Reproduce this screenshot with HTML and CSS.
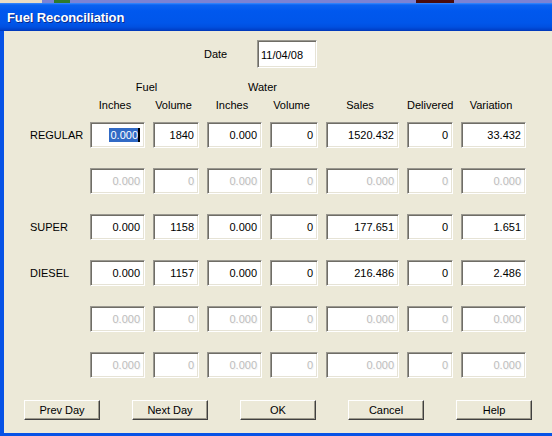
FILE: index.html
```html
<!DOCTYPE html>
<html>
<head>
<meta charset="utf-8">
<link rel="stylesheet" href="styles.css">
</head>
<body>
<div class="strip">
  <span class="strip-tan"></span>
  <span class="strip-gap1"></span>
  <span class="strip-green"></span>
  <span class="strip-gap2"></span>
  <span class="strip-red"></span>
</div>
<div class="window">
  <div class="titlebar"><span class="title">Fuel Reconciliation</span></div>
  <div class="client">
    <div class="date-row">
      <span class="lbl">Date</span>
      <div class="field date">11/04/08</div>
    </div>
    <div class="hdr">
      <div class="grp g1">Fuel</div>
      <div class="grp g2">Water</div>
      <div class="col c1">Inches</div>
      <div class="col c2">Volume</div>
      <div class="col c3">Inches</div>
      <div class="col c4">Volume</div>
      <div class="col c5">Sales</div>
      <div class="col c6">Delivered</div>
      <div class="col c7">Variation</div>
    </div>
    <div class="rows">
      <div class="rlbl">REGULAR</div>
      <div class="field"><span class="sel">0.000</span><span class="caret"></span></div>
      <div class="field">1840</div>
      <div class="field">0.000</div>
      <div class="field">0</div>
      <div class="field">1520.432</div>
      <div class="field">0</div>
      <div class="field">33.432</div>

      <div class="rlbl"></div>
      <div class="field off">0.000</div>
      <div class="field off">0</div>
      <div class="field off">0.000</div>
      <div class="field off">0</div>
      <div class="field off">0.000</div>
      <div class="field off">0</div>
      <div class="field off">0.000</div>

      <div class="rlbl">SUPER</div>
      <div class="field">0.000</div>
      <div class="field">1158</div>
      <div class="field">0.000</div>
      <div class="field">0</div>
      <div class="field">177.651</div>
      <div class="field">0</div>
      <div class="field">1.651</div>

      <div class="rlbl">DIESEL</div>
      <div class="field">0.000</div>
      <div class="field">1157</div>
      <div class="field">0.000</div>
      <div class="field">0</div>
      <div class="field">216.486</div>
      <div class="field">0</div>
      <div class="field">2.486</div>

      <div class="rlbl"></div>
      <div class="field off">0.000</div>
      <div class="field off">0</div>
      <div class="field off">0.000</div>
      <div class="field off">0</div>
      <div class="field off">0.000</div>
      <div class="field off">0</div>
      <div class="field off">0.000</div>

      <div class="rlbl"></div>
      <div class="field off">0.000</div>
      <div class="field off">0</div>
      <div class="field off">0.000</div>
      <div class="field off">0</div>
      <div class="field off">0.000</div>
      <div class="field off">0</div>
      <div class="field off">0.000</div>
    </div>
    <div class="buttons">
      <div class="btn">Prev Day</div>
      <div class="btn">Next Day</div>
      <div class="btn">OK</div>
      <div class="btn">Cancel</div>
      <div class="btn">Help</div>
    </div>
  </div>
</div>
</body>
</html>
```
FILE: styles.css
```css
html, body {
  margin: 0;
  padding: 0;
  width: 552px;
  height: 436px;
  overflow: hidden;
  background: #ece9d8;
  font-family: "Liberation Sans", Arial, sans-serif;
  font-size: 11px;
  color: #000;
}

.strip {
  display: flex;
  height: 3px;
  background: #7b83d4;
}
.strip-tan { width: 42px; background: #e9dcc4; }
.strip-gap1 { width: 12px; }
.strip-green { width: 16px; background: #2f7a2a; }
.strip-gap2 { width: 346px; }
.strip-red { width: 38px; background: #4a0c0c; }

.window {
  display: flex;
  flex-direction: column;
  height: 433px;
  box-sizing: border-box;
  border-left: 4px solid #0652e6;
  border-bottom: 3px solid #0652e6;
  box-shadow: inset 0 -1px 0 #0042c8;
}

.titlebar {
  height: 28px;
  display: flex;
  align-items: center;
  background: linear-gradient(to bottom, #3a8cff 0px, #0a62f0 2px, #0058ee 8px, #0056ea 20px, #0050e0 24px, #003fc8 27px, #0034b0 28px);
  margin-left: -4px;
  padding-left: 7px;
}
.title {
  color: #fff;
  font-weight: bold;
  font-size: 13px;
  text-shadow: 1px 1px 0 #0a2a8a;
  letter-spacing: -0.1px;
}

.client {
  flex: 1;
  display: flex;
  flex-direction: column;
  background: #ece9d8;
}

.date-row {
  display: flex;
  align-items: center;
  gap: 30px;
  padding-left: 200px;
  margin-top: 9px;
}
.date-row .lbl { width: 23px; }
.field.date {
  width: 60px;
  height: 28px;
  justify-content: flex-start;
  padding-left: 3px;
  padding-right: 0;
  padding-top: 2px;
}

.hdr, .rows {
  display: grid;
  grid-template-columns: 52px 55px 46px 55px 48px 73px 46px 65px;
  column-gap: 8px;
  padding-left: 26px;
}
.hdr {
  grid-template-rows: 18px 18px;
  margin-top: 10px;
  line-height: 18px;
  text-align: center;
}
.grp.g1 { grid-row: 1; grid-column: 2 / 4; padding-left: 4px; }
.grp.g2 { grid-row: 1; grid-column: 4 / 6; }
.col { grid-row: 2; padding-right: 5px; }
.c1 { grid-column: 2; }
.c2 { grid-column: 3; }
.c3 { grid-column: 4; }
.c4 { grid-column: 5; }
.c5 { grid-column: 6; }
.c6 { grid-column: 7; }
.c7 { grid-column: 8; }

.rows {
  margin-top: 8px;
  grid-auto-rows: 26px;
  row-gap: 20px;
}
.rlbl {
  display: flex;
  align-items: center;
  padding-left: 0;
}

.field {
  display: flex;
  align-items: center;
  justify-content: flex-end;
  box-sizing: border-box;
  background: #fff;
  border-top: 1px solid #9a9890;
  border-left: 1px solid #9a9890;
  border-right: 1px solid #fff;
  border-bottom: 1px solid #fff;
  box-shadow: inset 1px 1px 0 #6f6d66, inset -1px -1px 0 #e6e3d6;
  padding-right: 4px;
}
.field.off {
  color: #bdbdbd;
  text-shadow: 1px 1px 0 #f4f4f4;
}
.sel {
  background: #316ac5;
  color: #fff;
  line-height: 14px;
  padding: 0 0 0 1px;
}
.caret {
  width: 2px;
  height: 14px;
  background: #000;
}

.buttons {
  display: flex;
  gap: 32px;
  padding-left: 20px;
  margin-top: 22px;
}
.btn {
  width: 76px;
  height: 20px;
  box-sizing: border-box;
  display: flex;
  align-items: center;
  justify-content: center;
  background: #ece9d8;
  border-top: 1px solid #fff;
  border-left: 1px solid #fff;
  border-right: 1px solid #404040;
  border-bottom: 1px solid #404040;
  box-shadow: inset -1px -1px 0 #9d9a8c;
}
```
